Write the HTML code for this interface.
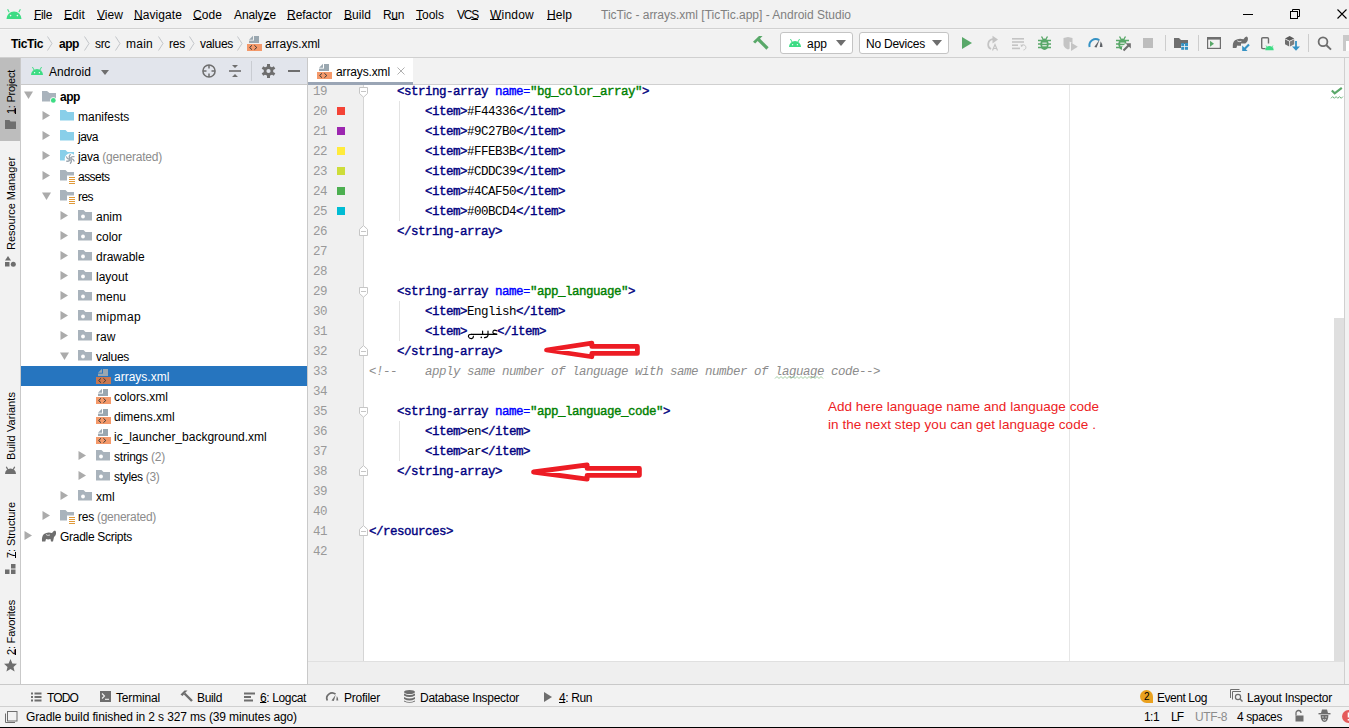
<!DOCTYPE html>
<html><head><meta charset="utf-8">
<style>
*{margin:0;padding:0;box-sizing:border-box}
html,body{width:1349px;height:728px;overflow:hidden;background:#f2f2f2;font-family:"Liberation Sans",sans-serif;font-size:12px;color:#000;position:relative}
.a{position:absolute;white-space:pre}
.ul{text-decoration:underline;text-underline-offset:0px}
svg{position:absolute;overflow:visible}
.vt{position:absolute;transform-origin:0 0;transform:rotate(-90deg);white-space:nowrap;font-size:11px;line-height:11px}
</style></head><body>
<div class="a" style="left:0px;top:0px;width:1349px;height:28px;background:#f2f2f2;"></div>
<div class="a" style="left:0px;top:28px;width:1349px;height:1px;background:#d1d1d1;"></div>
<div class="a" style="left:0px;top:29px;width:1349px;height:1px;background:#f6f6f6;"></div>
<div class="a" style="left:0px;top:57px;width:1349px;height:1px;background:#d0d0d0;"></div>
<div class="a" style="left:0px;top:58px;width:20px;height:626px;background:#f2f2f2;"></div>
<div class="a" style="left:0px;top:58px;width:20px;height:83px;background:#bdbdbd;"></div>
<div class="a" style="left:20px;top:58px;width:1px;height:626px;background:#c9c9c9;"></div>
<div class="a" style="left:21px;top:58px;width:286px;height:26px;background:#e2e5ec;"></div>
<div class="a" style="left:21px;top:84px;width:286px;height:1px;background:#c9c9c9;"></div>
<div class="a" style="left:21px;top:85px;width:286px;height:599px;background:#ffffff;"></div>
<div class="a" style="left:307px;top:58px;width:1px;height:626px;background:#c9c9c9;"></div>
<div class="a" style="left:308px;top:58px;width:1036px;height:24px;background:#f2f2f2;"></div>
<div class="a" style="left:308px;top:84px;width:1036px;height:1px;background:#d0d0d0;"></div>
<div class="a" style="left:308px;top:58px;width:105px;height:24px;background:#ffffff;"></div>
<div class="a" style="left:308px;top:82px;width:105px;height:3px;background:#9aa5b5;"></div>
<div class="a" style="left:308px;top:85px;width:1036px;height:576px;background:#ffffff;"></div>
<div class="a" style="left:308px;top:85px;width:55px;height:576px;background:#f0f0f0;"></div>
<div class="a" style="left:363px;top:85px;width:1px;height:576px;background:#d5d5d5;"></div>
<div class="a" style="left:1069px;top:85px;width:1px;height:576px;background:#e6e6e6;"></div>
<div class="a" style="left:1334px;top:318px;width:10px;height:343px;background:#dfdfdf;"></div>
<div class="a" style="left:1344px;top:58px;width:1px;height:626px;background:#d0d0d0;"></div>
<div class="a" style="left:308px;top:662px;width:1036px;height:22px;background:#efefef;"></div>
<div class="a" style="left:308px;top:661px;width:1036px;height:1px;background:#e0e0e0;"></div>
<div class="a" style="left:0px;top:684px;width:1349px;height:1px;background:#c9c9c9;"></div>
<div class="a" style="left:0px;top:706px;width:1349px;height:1px;background:#d0d0d0;"></div>
<div class="a" style="left:0px;top:727px;width:1349px;height:1px;background:#000000;"></div>
<svg style="left:6px;top:9px;" width="16" height="10" viewBox="0 0 16 10"><path d="M0.5 10 A7.5 7.5 0 0 1 15.5 10 Z" fill="#3ddc84"/><path d="M3.2 3.2 L1.6 0.3 M12.8 3.2 L14.4 0.3" stroke="#3ddc84" stroke-width="1.1"/><circle cx="4.6" cy="6.6" r="0.8" fill="#f2f2f2"/><circle cx="11.4" cy="6.6" r="0.8" fill="#f2f2f2"/></svg>
<div class="a" style="left:34px;top:9px;font-family:'Liberation Sans',sans-serif;font-size:12px;line-height:12px;color:#000;letter-spacing:-0.334px;"><span class="ul">F</span>ile</div>
<div class="a" style="left:64px;top:9px;font-family:'Liberation Sans',sans-serif;font-size:12px;line-height:12px;color:#000;letter-spacing:0.080px;"><span class="ul">E</span>dit</div>
<div class="a" style="left:97px;top:9px;font-family:'Liberation Sans',sans-serif;font-size:12px;line-height:12px;color:#000;letter-spacing:0.051px;"><span class="ul">V</span>iew</div>
<div class="a" style="left:134px;top:9px;font-family:'Liberation Sans',sans-serif;font-size:12px;line-height:12px;color:#000;letter-spacing:0.080px;"><span class="ul">N</span>avigate</div>
<div class="a" style="left:193px;top:9px;font-family:'Liberation Sans',sans-serif;font-size:12px;line-height:12px;color:#000;letter-spacing:0.078px;"><span class="ul">C</span>ode</div>
<div class="a" style="left:234px;top:9px;font-family:'Liberation Sans',sans-serif;font-size:12px;line-height:12px;color:#000;letter-spacing:-0.099px;">Analy<span class="ul">z</span>e</div>
<div class="a" style="left:287px;top:9px;font-family:'Liberation Sans',sans-serif;font-size:12px;line-height:12px;color:#000;letter-spacing:-0.044px;"><span class="ul">R</span>efactor</div>
<div class="a" style="left:344px;top:9px;font-family:'Liberation Sans',sans-serif;font-size:12px;line-height:12px;color:#000;letter-spacing:0.063px;"><span class="ul">B</span>uild</div>
<div class="a" style="left:383px;top:9px;font-family:'Liberation Sans',sans-serif;font-size:12px;line-height:12px;color:#000;letter-spacing:-0.338px;">R<span class="ul">u</span>n</div>
<div class="a" style="left:416px;top:9px;font-family:'Liberation Sans',sans-serif;font-size:12px;line-height:12px;color:#000;letter-spacing:-0.003px;"><span class="ul">T</span>ools</div>
<div class="a" style="left:457px;top:9px;font-family:'Liberation Sans',sans-serif;font-size:12px;line-height:12px;color:#000;letter-spacing:-1.225px;">VC<span class="ul">S</span></div>
<div class="a" style="left:490px;top:9px;font-family:'Liberation Sans',sans-serif;font-size:12px;line-height:12px;color:#000;letter-spacing:0.220px;"><span class="ul">W</span>indow</div>
<div class="a" style="left:547px;top:9px;font-family:'Liberation Sans',sans-serif;font-size:12px;line-height:12px;color:#000;letter-spacing:0.080px;"><span class="ul">H</span>elp</div>
<div class="a" style="left:601px;top:9px;font-family:'Liberation Sans',sans-serif;font-size:12px;line-height:12px;color:#808080;letter-spacing:-0.006px;">TicTic - arrays.xml [TicTic.app] - Android Studio</div>
<div class="a" style="left:1243px;top:14px;width:10px;height:1px;background:#000;"></div>
<svg style="left:1290px;top:9px;" width="10" height="10" viewBox="0 0 10 10"><rect x="0.5" y="2.5" width="7" height="7" fill="none" stroke="#000"/><path d="M2.5 2.5 V0.5 H9.5 V7.5 H7.5" fill="none" stroke="#000"/></svg>
<svg style="left:1337px;top:9px;" width="10" height="10" viewBox="0 0 10 10"><path d="M0.5 0.5 L9.5 9.5 M9.5 0.5 L0.5 9.5" stroke="#000" stroke-width="1.1"/></svg>
<div class="a" style="left:11px;top:38px;font-family:'Liberation Sans',sans-serif;font-size:12px;line-height:12px;color:#000;letter-spacing:-0.374px;font-weight:bold;">TicTic</div>
<svg style="left:47px;top:36px;" width="6" height="15" viewBox="0 0 6 15"><path d="M0.5 0.5 L5 7.5 L0.5 14.5" fill="none" stroke="#c3c6ca" stroke-width="1"/></svg>
<div class="a" style="left:59px;top:38px;font-family:'Liberation Sans',sans-serif;font-size:12px;line-height:12px;color:#000;letter-spacing:-0.445px;font-weight:bold;">app</div>
<svg style="left:84px;top:36px;" width="6" height="15" viewBox="0 0 6 15"><path d="M0.5 0.5 L5 7.5 L0.5 14.5" fill="none" stroke="#c3c6ca" stroke-width="1"/></svg>
<div class="a" style="left:95px;top:38px;font-family:'Liberation Sans',sans-serif;font-size:12px;line-height:12px;color:#000;letter-spacing:-0.332px;">src</div>
<svg style="left:115px;top:36px;" width="6" height="15" viewBox="0 0 6 15"><path d="M0.5 0.5 L5 7.5 L0.5 14.5" fill="none" stroke="#c3c6ca" stroke-width="1"/></svg>
<div class="a" style="left:126px;top:38px;font-family:'Liberation Sans',sans-serif;font-size:12px;line-height:12px;color:#000;letter-spacing:0.247px;">main</div>
<svg style="left:158px;top:36px;" width="6" height="15" viewBox="0 0 6 15"><path d="M0.5 0.5 L5 7.5 L0.5 14.5" fill="none" stroke="#c3c6ca" stroke-width="1"/></svg>
<div class="a" style="left:169px;top:38px;font-family:'Liberation Sans',sans-serif;font-size:12px;line-height:12px;color:#000;letter-spacing:-0.224px;">res</div>
<svg style="left:189px;top:36px;" width="6" height="15" viewBox="0 0 6 15"><path d="M0.5 0.5 L5 7.5 L0.5 14.5" fill="none" stroke="#c3c6ca" stroke-width="1"/></svg>
<div class="a" style="left:200px;top:38px;font-family:'Liberation Sans',sans-serif;font-size:12px;line-height:12px;color:#000;letter-spacing:-0.281px;">values</div>
<svg style="left:237px;top:36px;" width="6" height="15" viewBox="0 0 6 15"><path d="M0.5 0.5 L5 7.5 L0.5 14.5" fill="none" stroke="#c3c6ca" stroke-width="1"/></svg>
<svg style="left:247px;top:36px;" width="15" height="15" viewBox="0 0 15 15"><rect x="7" y="0" width="5" height="7" fill="#9aa7b0"/><rect x="2" y="4.6" width="10" height="2.4" fill="#9aa7b0"/><path d="M2 3.8 H6 V-0.2 Z" fill="#9aa7b0"/><rect x="0" y="8" width="15" height="7" fill="#f4996a"/><path d="M5 9.3 L2.6 11.5 L5 13.7 M7.4 9.3 L9.8 11.5 L7.4 13.7" fill="none" stroke="#3a3a3a" stroke-width="1"/></svg>
<div class="a" style="left:265px;top:38px;font-family:'Liberation Sans',sans-serif;font-size:12px;line-height:12px;color:#000;letter-spacing:-0.034px;">arrays.xml</div>
<svg style="left:752px;top:35px;" width="17" height="16" viewBox="0 0 17 16"><path d="M1 6.8 L7 1 L10.5 1 L8.2 3.4 L3.2 8.5 Z" fill="#59a869"/><path d="M6.5 4.5 L15.5 13.5" stroke="#59a869" stroke-width="3.2"/></svg>
<div class="a" style="left:780px;top:32px;width:73px;height:22px;border:1px solid #c4c4c4;border-radius:3px;background:#fff"></div>
<svg style="left:789px;top:39px;" width="12" height="7.92" viewBox="0 0 12 7.92"><path d="M0 7.92 A6.00 6.00 0 0 1 12 7.92 Z" fill="#3ddc84" transform="translate(0,0.00)"/><path d="M3.24 3.33 L1.44 0 M8.76 3.33 L10.56 0" stroke="#3ddc84" stroke-width="0.96"/><circle cx="3.60" cy="5.70" r="0.66" fill="#ffffff"/><circle cx="8.40" cy="5.70" r="0.66" fill="#ffffff"/></svg>
<div class="a" style="left:807px;top:38px;font-family:'Liberation Sans',sans-serif;font-size:12px;line-height:12px;color:#000;letter-spacing:-0.007px;">app</div>
<svg style="left:836px;top:40px;" width="10" height="6" viewBox="0 0 10 6"><path d="M0 0 H10 L5 6 Z" fill="#6e6e6e"/></svg>
<div class="a" style="left:859px;top:32px;width:90px;height:22px;border:1px solid #c4c4c4;border-radius:3px;background:#fff"></div>
<div class="a" style="left:866px;top:38px;font-family:'Liberation Sans',sans-serif;font-size:12px;line-height:12px;color:#000;letter-spacing:-0.235px;">No Devices</div>
<svg style="left:932px;top:40px;" width="10" height="6" viewBox="0 0 10 6"><path d="M0 0 H10 L5 6 Z" fill="#6e6e6e"/></svg>
<svg style="left:962px;top:37px;" width="10" height="12" viewBox="0 0 10 12"><path d="M0 0 L10 6 L0 12 Z" fill="#59a869"/></svg>
<svg style="left:984px;top:35px;" width="16" height="16" viewBox="0 0 16 16"><path d="M7 14 A5.2 5.2 0 0 1 9 4.2" fill="none" stroke="#c4c4c4" stroke-width="1.8"/><path d="M8.5 0.8 L14 4.5 L8.5 8.5 Z" fill="#c4c4c4"/><path d="M8.5 15.5 L11 9.5 L13.5 15.5 M9.5 13.5 H12.5" fill="none" stroke="#c4c4c4" stroke-width="1.2"/></svg>
<svg style="left:1012px;top:37px;" width="16" height="14" viewBox="0 0 16 14"><rect x="0" y="1" width="12" height="1.6" fill="#c4c4c4"/><rect x="0" y="4.2" width="12" height="1.6" fill="#c4c4c4"/><rect x="0" y="7.4" width="6" height="1.6" fill="#c4c4c4"/><rect x="0" y="10.6" width="8" height="1.6" fill="#c4c4c4"/><path d="M9.5 8.5 A2.6 2.6 0 1 1 11.5 13" fill="none" stroke="#c4c4c4" stroke-width="1"/><path d="M8.6 7.2 L9 10 L11.5 8.8 Z" fill="#c4c4c4"/></svg>
<svg style="left:1037.5px;top:36px;" width="13" height="14" viewBox="0 0 13 14"><path d="M3.5 0.5 L5 3 M9.5 0.5 L8 3" stroke="#59a869" stroke-width="1.4"/><ellipse cx="6.5" cy="8.3" rx="4.2" ry="5.7" fill="#59a869"/><path d="M0 4.5 H13 M0 8 H13 M0 11.5 H13" stroke="#59a869" stroke-width="1.4"/><rect x="4.3" y="6.6" width="4.4" height="1.1" fill="#f2f2f2"/><rect x="4.3" y="9.2" width="4.4" height="1.1" fill="#f2f2f2"/></svg>
<svg style="left:1063px;top:37px;" width="15" height="14" viewBox="0 0 15 14"><path d="M0.5 1 L5 0 L9.5 1 V7.5 Q9.5 10.5 5 12.5 Q0.5 10.5 0.5 7.5 Z" fill="#c4c4c4"/><path d="M6.6 4.6 L15.6 9.8 L6.6 15 Z" fill="#f2f2f2"/><path d="M8 5.6 L14.8 9.8 L8 14 Z" fill="#c4c4c4"/></svg>
<svg style="left:1088px;top:37px;" width="16" height="11" viewBox="0 0 16 11"><path d="M1.6 10 A6.3 6.3 0 0 1 11.2 3.2" fill="none" stroke="#3592c4" stroke-width="2"/><path d="M6.3 10 L11.8 2.2 L8.6 10.4 Z" fill="#5f6368"/><path d="M12.6 4.2 Q14.5 6.5 14.5 10 H11.8 Z" fill="#5f6368"/></svg>
<svg style="left:1115.5px;top:36px;" width="13" height="14" viewBox="0 0 13 14"><path d="M3.5 0.5 L5 3 M9.5 0.5 L8 3" stroke="#59a869" stroke-width="1.4"/><ellipse cx="6.5" cy="8.3" rx="4.2" ry="5.7" fill="#59a869"/><path d="M0 4.5 H13 M0 8 H13 M0 11.5 H13" stroke="#59a869" stroke-width="1.4"/><rect x="4.3" y="6.6" width="4.4" height="1.1" fill="#f2f2f2"/><rect x="4.3" y="9.2" width="4.4" height="1.1" fill="#f2f2f2"/></svg>
<svg style="left:1121px;top:41px;" width="11" height="11" viewBox="0 0 11 11"><path d="M1 10 L1 6 L5.5 1.5 H11 V11 Z" fill="#f2f2f2"/><path d="M2.5 9.5 L8 4" stroke="#6e6e6e" stroke-width="2.2"/><path d="M4.5 2.2 H9.8 V7.5 Z" fill="#6e6e6e"/></svg>
<div class="a" style="left:1143px;top:38px;width:10px;height:10px;background:#bdbdbd;"></div>
<div class="a" style="left:1165px;top:35px;width:1px;height:16px;background:#cdcdcd;"></div>
<svg style="left:1174px;top:38px;" width="15" height="12" viewBox="0 0 15 12"><path d="M0 0 H5 L7 2 H14 V6 H7 V10 H0 Z" fill="#6e6e6e"/><rect x="7.2" y="5" width="3" height="3" fill="#3592c4"/><rect x="11" y="5" width="3" height="3" fill="#3592c4"/><rect x="7.2" y="8.8" width="3" height="3" fill="#3592c4"/><rect x="11" y="8.8" width="3" height="3" fill="#3592c4"/></svg>
<div class="a" style="left:1198px;top:35px;width:1px;height:16px;background:#cdcdcd;"></div>
<svg style="left:1207px;top:37px;" width="14" height="12" viewBox="0 0 14 12"><rect x="0.6" y="0.6" width="12.8" height="10.8" fill="none" stroke="#6e6e6e" stroke-width="1.2"/><rect x="0" y="0" width="14" height="2.6" fill="#6e6e6e"/><path d="M3 3.8 L7 6.8 L3 9.8 Z" fill="#59a869"/></svg>
<svg style="left:1232px;top:36px;" width="18" height="15" viewBox="0 0 18 15"><path d="M0.8 12 Q0.3 6.5 3 4.3 Q6.8 1.8 11.5 3.3 Q13 0.6 14.6 0.6 Q16.4 1.1 15.8 4.3 Q15.2 6.3 13.6 7.3 L12.6 12 H10.4 L9.9 9.4 Q7.3 10.2 5.2 9.4 L4.4 12 Z" fill="#6e6e6e"/><path d="M5.2 4.8 Q6.8 6.3 9.4 5.3" fill="none" stroke="#f2f2f2" stroke-width="0.8"/><rect x="9" y="7.5" width="9" height="8" fill="#f2f2f2"/><path d="M17 8.5 L12 13.5" stroke="#3592c4" stroke-width="2.2"/><path d="M10.2 9.6 V15 H15.6 Z" fill="#3592c4"/></svg>
<svg style="left:1261px;top:37px;" width="13" height="14" viewBox="0 0 13 14"><path d="M4.5 11.6 H1.8 Q0.7 11.6 0.7 10.5 V1.8 Q0.7 0.7 1.8 0.7 H6.4 Q7.5 0.7 7.5 1.8 V6.5" fill="none" stroke="#6e6e6e" stroke-width="1.4"/><path d="M4.3 13.2 A4.2 4.2 0 0 1 12.7 13.2 Z" fill="#3ddc84"/><path d="M5.9 9.9 L5.1 8.6 M11.1 9.9 L11.9 8.6" stroke="#3ddc84" stroke-width="0.9"/></svg>
<svg style="left:1285px;top:36px;" width="16" height="15" viewBox="0 0 16 15"><path d="M4.6 0 L9.2 2.4 L4.6 4.8 L0 2.4 Z" fill="#5a5a5a"/><path d="M0 3.2 L4.2 5.4 V10.5 L0 8.3 Z" fill="#6e6e6e"/><path d="M9.2 3.2 L5 5.4 V10.5 L9.2 8.3 Z" fill="#7f7f7f"/><path d="M11 5 V12" stroke="#3592c4" stroke-width="1.8"/><path d="M7 10.5 H15 L11 14.8 Z" fill="#3592c4"/></svg>
<div class="a" style="left:1308px;top:34px;width:1px;height:18px;background:#cdcdcd;"></div>
<svg style="left:1317px;top:36px;" width="16" height="16" viewBox="0 0 16 16"><circle cx="6" cy="5.8" r="4.4" fill="none" stroke="#6e6e6e" stroke-width="1.8"/><path d="M9.2 9 L14 13.6" stroke="#6e6e6e" stroke-width="2"/></svg>
<div class="a" style="left:1343px;top:35px;width:6px;height:16px;background:#c9c9c9;"></div>
<div class="a" style="left:1346px;top:41px;width:3px;height:10px;background:#ffffff;"></div>
<div class="vt" style="left:6px;top:114px;color:#000;letter-spacing:-0.247px;"><span class="ul">1</span>: Project</div>
<svg style="left:5px;top:120px;" width="11" height="9" viewBox="0 0 11 9"><path d="M0 0 H4.5 L5.5 1.5 H11 V9 H0 Z" fill="#6e6e6e"/></svg>
<div class="vt" style="left:6px;top:250px;color:#000;letter-spacing:-0.034px;">Resource Manager</div>
<svg style="left:5px;top:256px;" width="11" height="11" viewBox="0 0 11 11"><path d="M3 0 L6 4.5 H0 Z" fill="#6e6e6e"/><rect x="0" y="6" width="4.5" height="4.5" fill="#6e6e6e"/><circle cx="8.3" cy="8.2" r="2.5" fill="#6e6e6e"/></svg>
<div class="vt" style="left:6px;top:460px;color:#000;letter-spacing:0.067px;">Build Variants</div>
<svg style="left:5px;top:466px;" width="11" height="8" viewBox="0 0 11 8"><path d="M0 8 A5.5 5.5 0 0 1 11 8 Z" fill="#6e6e6e"/><path d="M2.8 3.6 L1.3 0.8 M8.2 3.6 L9.7 0.8" stroke="#6e6e6e" stroke-width="1.2"/></svg>
<div class="vt" style="left:6px;top:558px;color:#000;letter-spacing:-0.072px;"><span class="ul">7</span>: Structure</div>
<svg style="left:5px;top:564px;" width="11" height="10" viewBox="0 0 11 10"><rect x="6" y="0" width="4.5" height="4.5" fill="#6e6e6e"/><rect x="0" y="5.5" width="4.5" height="4.5" fill="#6e6e6e"/><rect x="6" y="5.5" width="4.5" height="4.5" fill="#6e6e6e"/></svg>
<div class="vt" style="left:6px;top:655px;color:#000;letter-spacing:-0.206px;"><span class="ul">2</span>: Favorites</div>
<svg style="left:4px;top:659px;" width="13" height="13" viewBox="0 0 13 13"><path d="M6.5 0 L8.4 4.4 L13 4.8 L9.5 7.9 L10.6 12.5 L6.5 10 L2.4 12.5 L3.5 7.9 L0 4.8 L4.6 4.4 Z" fill="#6e6e6e"/></svg>
<svg style="left:31px;top:67px;" width="12" height="7.92" viewBox="0 0 12 7.92"><path d="M0 7.92 A6.00 6.00 0 0 1 12 7.92 Z" fill="#3ddc84" transform="translate(0,0.00)"/><path d="M3.24 3.33 L1.44 0 M8.76 3.33 L10.56 0" stroke="#3ddc84" stroke-width="0.96"/><circle cx="3.60" cy="5.70" r="0.66" fill="#ffffff"/><circle cx="8.40" cy="5.70" r="0.66" fill="#ffffff"/></svg>
<div class="a" style="left:49px;top:66px;font-family:'Liberation Sans',sans-serif;font-size:12px;line-height:12px;color:#000;letter-spacing:0.091px;">Android</div>
<svg style="left:101px;top:70px;" width="8" height="5" viewBox="0 0 8 5"><path d="M0 0 H8 L4 5 Z" fill="#6e6e6e"/></svg>
<svg style="left:202px;top:64px;" width="14" height="14" viewBox="0 0 14 14"><circle cx="7" cy="7" r="6.1" fill="none" stroke="#6e6e6e" stroke-width="1.5"/><path d="M7 1 V4.5 M7 9.5 V13 M1 7 H4.5 M9.5 7 H13" stroke="#6e6e6e" stroke-width="1.5"/></svg>
<svg style="left:229px;top:65px;" width="12" height="13" viewBox="0 0 12 13"><rect x="0" y="5.2" width="12" height="1.6" fill="#6e6e6e"/><path d="M3 0 H9 L6 3 Z M3 12 H9 L6 9 Z" fill="#6e6e6e"/></svg>
<div class="a" style="left:251px;top:61px;width:1px;height:20px;background:#c9ccd2;"></div>
<svg style="left:262px;top:64px;" width="13" height="14" viewBox="0 0 13 14"><g fill="#6e6e6e"><circle cx="6.5" cy="7" r="4.8"/><rect x="5" y="0" width="3" height="14"/><rect x="5" y="0" width="3" height="14" transform="rotate(60 6.5 7)"/><rect x="5" y="0" width="3" height="14" transform="rotate(-60 6.5 7)"/></g><circle cx="6.5" cy="7" r="2.1" fill="#e2e5ec"/></svg>
<div class="a" style="left:288px;top:70px;width:12px;height:2px;background:#6e6e6e;"></div>
<svg style="left:24px;top:91px;" width="9" height="8" viewBox="0 0 9 8"><path d="M0 0.5 H9 L4.5 8 Z" fill="#ababab"/></svg>
<svg style="left:42px;top:91px;" width="14" height="12" viewBox="0 0 14 12"><path d="M0 0 H5 L7.5 2 H14 V10.5 H0 Z" fill="#a9b3bc"/><circle cx="11.3" cy="9.4" r="3.2" fill="#fff"/><circle cx="11.3" cy="9.4" r="2.4" fill="#3ddc84"/></svg>
<div class="a" style="left:60px;top:91px;font-family:'Liberation Sans',sans-serif;font-size:12px;line-height:12px;color:#000;letter-spacing:-0.445px;font-weight:bold;">app</div>
<div class="a" style="left:21px;top:366px;width:286px;height:20px;background:#2675bf;"></div>
<svg style="left:42px;top:111px;" width="8" height="9" viewBox="0 0 8 9"><path d="M0.5 0 L8 4.5 L0.5 9 Z" fill="#ababab"/></svg>
<svg style="left:60px;top:110px;" width="14" height="11" viewBox="0 0 14 11"><path d="M0 0 H5.5 L7.5 2 H14 V10.5 H0 Z" fill="#89cfe9"/></svg>
<div class="a" style="left:78px;top:111px;font-family:'Liberation Sans',sans-serif;font-size:12px;line-height:12px;color:#000;">manifests</div>
<svg style="left:42px;top:131px;" width="8" height="9" viewBox="0 0 8 9"><path d="M0.5 0 L8 4.5 L0.5 9 Z" fill="#ababab"/></svg>
<svg style="left:60px;top:130px;" width="14" height="11" viewBox="0 0 14 11"><path d="M0 0 H5.5 L7.5 2 H14 V10.5 H0 Z" fill="#89cfe9"/></svg>
<div class="a" style="left:78px;top:131px;font-family:'Liberation Sans',sans-serif;font-size:12px;line-height:12px;color:#000;letter-spacing:-0.504px;">java</div>
<svg style="left:42px;top:151px;" width="8" height="9" viewBox="0 0 8 9"><path d="M0.5 0 L8 4.5 L0.5 9 Z" fill="#ababab"/></svg>
<svg style="left:60px;top:150px;" width="15" height="14" viewBox="0 0 15 14"><path d="M0 0 H5.5 L7.5 2 H14 V10.5 H0 Z" fill="#89cfe9"/><circle cx="10.3" cy="8.9" r="5.6" fill="#fff"/><path d="M11.30 8.90 Q13.27 8.45 14.07 10.96 M10.80 9.77 Q12.17 11.24 10.40 13.20 M9.80 9.77 Q9.21 11.69 6.63 11.14 M9.30 8.90 Q7.33 9.35 6.53 6.84 M9.80 8.03 Q8.43 6.56 10.20 4.60 M10.80 8.03 Q11.39 6.11 13.97 6.66 " fill="none" stroke="#9aa4ad" stroke-width="1.3" stroke-linecap="round"/></svg>
<div class="a" style="left:78px;top:151px;font-family:'Liberation Sans',sans-serif;font-size:12px;line-height:12px;color:#000;letter-spacing:-0.212px;">java<span style="color:#8c8c8c"> (generated)</span></div>
<svg style="left:42px;top:171px;" width="8" height="9" viewBox="0 0 8 9"><path d="M0.5 0 L8 4.5 L0.5 9 Z" fill="#ababab"/></svg>
<svg style="left:60px;top:170px;" width="14" height="13" viewBox="0 0 14 13"><path d="M0 0 H5.5 L7.5 2 H14 V10.5 H0 Z" fill="#a9b3bc"/><rect x="7" y="5.5" width="8" height="8.5" fill="#fff"/><path d="M9 7.5 H15 M9 9.5 H15 M9 11.5 H15 M9 13.5 H15" stroke="#e09a3a" stroke-width="1"/></svg>
<div class="a" style="left:78px;top:171px;font-family:'Liberation Sans',sans-serif;font-size:12px;line-height:12px;color:#000;letter-spacing:-0.530px;">assets</div>
<svg style="left:42px;top:192px;" width="9" height="8" viewBox="0 0 9 8"><path d="M0 0.5 H9 L4.5 8 Z" fill="#ababab"/></svg>
<svg style="left:60px;top:190px;" width="14" height="13" viewBox="0 0 14 13"><path d="M0 0 H5.5 L7.5 2 H14 V10.5 H0 Z" fill="#a9b3bc"/><rect x="7" y="5.5" width="8" height="8.5" fill="#fff"/><path d="M9 7.5 H15 M9 9.5 H15 M9 11.5 H15 M9 13.5 H15" stroke="#e09a3a" stroke-width="1"/></svg>
<div class="a" style="left:78px;top:191px;font-family:'Liberation Sans',sans-serif;font-size:12px;line-height:12px;color:#000;letter-spacing:-0.557px;">res</div>
<svg style="left:60px;top:211px;" width="8" height="9" viewBox="0 0 8 9"><path d="M0.5 0 L8 4.5 L0.5 9 Z" fill="#ababab"/></svg>
<svg style="left:78px;top:210px;" width="14" height="11" viewBox="0 0 14 11"><path d="M0 0 H5.5 L7.5 2 H14 V10.5 H0 Z" fill="#a9b3bc"/><circle cx="5" cy="6.5" r="1.9" fill="#fff"/></svg>
<div class="a" style="left:96px;top:211px;font-family:'Liberation Sans',sans-serif;font-size:12px;line-height:12px;color:#000;">anim</div>
<svg style="left:60px;top:231px;" width="8" height="9" viewBox="0 0 8 9"><path d="M0.5 0 L8 4.5 L0.5 9 Z" fill="#ababab"/></svg>
<svg style="left:78px;top:230px;" width="14" height="11" viewBox="0 0 14 11"><path d="M0 0 H5.5 L7.5 2 H14 V10.5 H0 Z" fill="#a9b3bc"/><circle cx="5" cy="6.5" r="1.9" fill="#fff"/></svg>
<div class="a" style="left:96px;top:231px;font-family:'Liberation Sans',sans-serif;font-size:12px;line-height:12px;color:#000;">color</div>
<svg style="left:60px;top:251px;" width="8" height="9" viewBox="0 0 8 9"><path d="M0.5 0 L8 4.5 L0.5 9 Z" fill="#ababab"/></svg>
<svg style="left:78px;top:250px;" width="14" height="11" viewBox="0 0 14 11"><path d="M0 0 H5.5 L7.5 2 H14 V10.5 H0 Z" fill="#a9b3bc"/><circle cx="5" cy="6.5" r="1.9" fill="#fff"/></svg>
<div class="a" style="left:96px;top:251px;font-family:'Liberation Sans',sans-serif;font-size:12px;line-height:12px;color:#000;">drawable</div>
<svg style="left:60px;top:271px;" width="8" height="9" viewBox="0 0 8 9"><path d="M0.5 0 L8 4.5 L0.5 9 Z" fill="#ababab"/></svg>
<svg style="left:78px;top:270px;" width="14" height="11" viewBox="0 0 14 11"><path d="M0 0 H5.5 L7.5 2 H14 V10.5 H0 Z" fill="#a9b3bc"/><circle cx="5" cy="6.5" r="1.9" fill="#fff"/></svg>
<div class="a" style="left:96px;top:271px;font-family:'Liberation Sans',sans-serif;font-size:12px;line-height:12px;color:#000;">layout</div>
<svg style="left:60px;top:291px;" width="8" height="9" viewBox="0 0 8 9"><path d="M0.5 0 L8 4.5 L0.5 9 Z" fill="#ababab"/></svg>
<svg style="left:78px;top:290px;" width="14" height="11" viewBox="0 0 14 11"><path d="M0 0 H5.5 L7.5 2 H14 V10.5 H0 Z" fill="#a9b3bc"/><circle cx="5" cy="6.5" r="1.9" fill="#fff"/></svg>
<div class="a" style="left:96px;top:291px;font-family:'Liberation Sans',sans-serif;font-size:12px;line-height:12px;color:#000;">menu</div>
<svg style="left:60px;top:311px;" width="8" height="9" viewBox="0 0 8 9"><path d="M0.5 0 L8 4.5 L0.5 9 Z" fill="#ababab"/></svg>
<svg style="left:78px;top:310px;" width="14" height="11" viewBox="0 0 14 11"><path d="M0 0 H5.5 L7.5 2 H14 V10.5 H0 Z" fill="#a9b3bc"/><circle cx="5" cy="6.5" r="1.9" fill="#fff"/></svg>
<div class="a" style="left:96px;top:311px;font-family:'Liberation Sans',sans-serif;font-size:12px;line-height:12px;color:#000;letter-spacing:0.386px;">mipmap</div>
<svg style="left:60px;top:331px;" width="8" height="9" viewBox="0 0 8 9"><path d="M0.5 0 L8 4.5 L0.5 9 Z" fill="#ababab"/></svg>
<svg style="left:78px;top:330px;" width="14" height="11" viewBox="0 0 14 11"><path d="M0 0 H5.5 L7.5 2 H14 V10.5 H0 Z" fill="#a9b3bc"/><circle cx="5" cy="6.5" r="1.9" fill="#fff"/></svg>
<div class="a" style="left:96px;top:331px;font-family:'Liberation Sans',sans-serif;font-size:12px;line-height:12px;color:#000;">raw</div>
<svg style="left:60px;top:352px;" width="9" height="8" viewBox="0 0 9 8"><path d="M0 0.5 H9 L4.5 8 Z" fill="#ababab"/></svg>
<svg style="left:78px;top:350px;" width="14" height="11" viewBox="0 0 14 11"><path d="M0 0 H5.5 L7.5 2 H14 V10.5 H0 Z" fill="#a9b3bc"/><circle cx="5" cy="6.5" r="1.9" fill="#fff"/></svg>
<div class="a" style="left:96px;top:351px;font-family:'Liberation Sans',sans-serif;font-size:12px;line-height:12px;color:#000;letter-spacing:-0.281px;">values</div>
<svg style="left:96px;top:369px;" width="15" height="15" viewBox="0 0 15 15"><rect x="7" y="0" width="5" height="7" fill="#9aa7b0"/><rect x="2" y="4.6" width="10" height="2.4" fill="#9aa7b0"/><path d="M2 3.8 H6 V-0.2 Z" fill="#9aa7b0"/><rect x="0" y="8" width="15" height="7" fill="#c87750"/><path d="M5 9.3 L2.6 11.5 L5 13.7 M7.4 9.3 L9.8 11.5 L7.4 13.7" fill="none" stroke="#3a3a3a" stroke-width="1"/></svg>
<div class="a" style="left:114px;top:371px;font-family:'Liberation Sans',sans-serif;font-size:12px;line-height:12px;color:#fff;">arrays.xml</div>
<svg style="left:96px;top:389px;" width="15" height="15" viewBox="0 0 15 15"><rect x="7" y="0" width="5" height="7" fill="#9aa7b0"/><rect x="2" y="4.6" width="10" height="2.4" fill="#9aa7b0"/><path d="M2 3.8 H6 V-0.2 Z" fill="#9aa7b0"/><rect x="0" y="8" width="15" height="7" fill="#f4996a"/><path d="M5 9.3 L2.6 11.5 L5 13.7 M7.4 9.3 L9.8 11.5 L7.4 13.7" fill="none" stroke="#3a3a3a" stroke-width="1"/></svg>
<div class="a" style="left:114px;top:391px;font-family:'Liberation Sans',sans-serif;font-size:12px;line-height:12px;color:#000;">colors.xml</div>
<svg style="left:96px;top:409px;" width="15" height="15" viewBox="0 0 15 15"><rect x="7" y="0" width="5" height="7" fill="#9aa7b0"/><rect x="2" y="4.6" width="10" height="2.4" fill="#9aa7b0"/><path d="M2 3.8 H6 V-0.2 Z" fill="#9aa7b0"/><rect x="0" y="8" width="15" height="7" fill="#f4996a"/><path d="M5 9.3 L2.6 11.5 L5 13.7 M7.4 9.3 L9.8 11.5 L7.4 13.7" fill="none" stroke="#3a3a3a" stroke-width="1"/></svg>
<div class="a" style="left:114px;top:411px;font-family:'Liberation Sans',sans-serif;font-size:12px;line-height:12px;color:#000;">dimens.xml</div>
<svg style="left:96px;top:429px;" width="15" height="15" viewBox="0 0 15 15"><rect x="7" y="0" width="5" height="7" fill="#9aa7b0"/><rect x="2" y="4.6" width="10" height="2.4" fill="#9aa7b0"/><path d="M2 3.8 H6 V-0.2 Z" fill="#9aa7b0"/><rect x="0" y="8" width="15" height="7" fill="#f4996a"/><path d="M5 9.3 L2.6 11.5 L5 13.7 M7.4 9.3 L9.8 11.5 L7.4 13.7" fill="none" stroke="#3a3a3a" stroke-width="1"/></svg>
<div class="a" style="left:114px;top:431px;font-family:'Liberation Sans',sans-serif;font-size:12px;line-height:12px;color:#000;">ic_launcher_background.xml</div>
<svg style="left:78px;top:451px;" width="8" height="9" viewBox="0 0 8 9"><path d="M0.5 0 L8 4.5 L0.5 9 Z" fill="#ababab"/></svg>
<svg style="left:96px;top:450px;" width="14" height="11" viewBox="0 0 14 11"><path d="M0 0 H5.5 L7.5 2 H14 V10.5 H0 Z" fill="#a9b3bc"/><circle cx="5" cy="6.5" r="1.9" fill="#fff"/></svg>
<div class="a" style="left:114px;top:451px;font-family:'Liberation Sans',sans-serif;font-size:12px;line-height:12px;color:#000;letter-spacing:-0.213px;">strings<span style="color:#8c8c8c"> (2)</span></div>
<svg style="left:78px;top:471px;" width="8" height="9" viewBox="0 0 8 9"><path d="M0.5 0 L8 4.5 L0.5 9 Z" fill="#ababab"/></svg>
<svg style="left:96px;top:470px;" width="14" height="11" viewBox="0 0 14 11"><path d="M0 0 H5.5 L7.5 2 H14 V10.5 H0 Z" fill="#a9b3bc"/><circle cx="5" cy="6.5" r="1.9" fill="#fff"/></svg>
<div class="a" style="left:114px;top:471px;font-family:'Liberation Sans',sans-serif;font-size:12px;line-height:12px;color:#000;letter-spacing:-0.317px;">styles<span style="color:#8c8c8c"> (3)</span></div>
<svg style="left:60px;top:491px;" width="8" height="9" viewBox="0 0 8 9"><path d="M0.5 0 L8 4.5 L0.5 9 Z" fill="#ababab"/></svg>
<svg style="left:78px;top:490px;" width="14" height="11" viewBox="0 0 14 11"><path d="M0 0 H5.5 L7.5 2 H14 V10.5 H0 Z" fill="#a9b3bc"/><circle cx="5" cy="6.5" r="1.9" fill="#fff"/></svg>
<div class="a" style="left:96px;top:491px;font-family:'Liberation Sans',sans-serif;font-size:12px;line-height:12px;color:#000;">xml</div>
<svg style="left:42px;top:511px;" width="8" height="9" viewBox="0 0 8 9"><path d="M0.5 0 L8 4.5 L0.5 9 Z" fill="#ababab"/></svg>
<svg style="left:60px;top:510px;" width="14" height="13" viewBox="0 0 14 13"><path d="M0 0 H5.5 L7.5 2 H14 V10.5 H0 Z" fill="#a9b3bc"/><rect x="7" y="5.5" width="8" height="8.5" fill="#fff"/><path d="M9 7.5 H15 M9 9.5 H15 M9 11.5 H15 M9 13.5 H15" stroke="#e09a3a" stroke-width="1"/></svg>
<div class="a" style="left:78px;top:511px;font-family:'Liberation Sans',sans-serif;font-size:12px;line-height:12px;color:#000;letter-spacing:-0.270px;">res<span style="color:#8c8c8c"> (generated)</span></div>
<svg style="left:24px;top:531px;" width="8" height="9" viewBox="0 0 8 9"><path d="M0.5 0 L8 4.5 L0.5 9 Z" fill="#ababab"/></svg>
<svg style="left:41px;top:530px;" width="16" height="12" viewBox="0 0 16 12"><path d="M1 11.5 Q0.5 6 3 4 Q6.5 1.5 11 3 Q12.5 0.5 14 0.5 Q15.5 1 15 4 Q14.5 6 13 7 L12 11.5 H10 L9.5 9 Q7 9.8 5 9 L4.3 11.5 Z" fill="#6e6e6e"/><path d="M5 4.5 Q6.5 6 9 5" fill="none" stroke="#fff" stroke-width="0.7"/></svg>
<div class="a" style="left:60px;top:531px;font-family:'Liberation Sans',sans-serif;font-size:12px;line-height:12px;color:#000;letter-spacing:-0.288px;">Gradle Scripts</div>
<svg style="left:317px;top:64px;" width="15" height="15" viewBox="0 0 15 15"><rect x="7" y="0" width="5" height="7" fill="#9aa7b0"/><rect x="2" y="4.6" width="10" height="2.4" fill="#9aa7b0"/><path d="M2 3.8 H6 V-0.2 Z" fill="#9aa7b0"/><rect x="0" y="8" width="15" height="7" fill="#f4996a"/><path d="M5 9.3 L2.6 11.5 L5 13.7 M7.4 9.3 L9.8 11.5 L7.4 13.7" fill="none" stroke="#3a3a3a" stroke-width="1"/></svg>
<div class="a" style="left:336px;top:66px;font-family:'Liberation Sans',sans-serif;font-size:12px;line-height:12px;color:#000;letter-spacing:-0.134px;">arrays.xml</div>
<svg style="left:397px;top:67px;" width="8" height="8" viewBox="0 0 8 8"><path d="M0.5 0.5 L7.5 7.5 M7.5 0.5 L0.5 7.5" stroke="#b0b0b0" stroke-width="1"/></svg>
<svg style="left:1331px;top:87px;" width="12" height="12" viewBox="0 0 12 12"><path d="M0.8 3.5 L3.7 6.3 L10.8 0.8" fill="none" stroke="#59a869" stroke-width="2.2"/><path d="M0 11.3 L1.7 9.6 L3.4 11.3 L5.1 9.6 L6.8 11.3 L8.5 9.6 L10.2 11.3 L11.9 9.6" fill="none" stroke="#59a869" stroke-width="0.9"/></svg>
<div class="a" style="left:313px;top:86px;font-family:'Liberation Mono',monospace;font-size:12.5px;line-height:12.5px;letter-spacing:-0.5px;color:#999999">19</div>
<div class="a" style="left:313px;top:106px;font-family:'Liberation Mono',monospace;font-size:12.5px;line-height:12.5px;letter-spacing:-0.5px;color:#999999">20</div>
<div class="a" style="left:313px;top:126px;font-family:'Liberation Mono',monospace;font-size:12.5px;line-height:12.5px;letter-spacing:-0.5px;color:#999999">21</div>
<div class="a" style="left:313px;top:146px;font-family:'Liberation Mono',monospace;font-size:12.5px;line-height:12.5px;letter-spacing:-0.5px;color:#999999">22</div>
<div class="a" style="left:313px;top:166px;font-family:'Liberation Mono',monospace;font-size:12.5px;line-height:12.5px;letter-spacing:-0.5px;color:#999999">23</div>
<div class="a" style="left:313px;top:186px;font-family:'Liberation Mono',monospace;font-size:12.5px;line-height:12.5px;letter-spacing:-0.5px;color:#999999">24</div>
<div class="a" style="left:313px;top:206px;font-family:'Liberation Mono',monospace;font-size:12.5px;line-height:12.5px;letter-spacing:-0.5px;color:#999999">25</div>
<div class="a" style="left:313px;top:226px;font-family:'Liberation Mono',monospace;font-size:12.5px;line-height:12.5px;letter-spacing:-0.5px;color:#999999">26</div>
<div class="a" style="left:313px;top:246px;font-family:'Liberation Mono',monospace;font-size:12.5px;line-height:12.5px;letter-spacing:-0.5px;color:#999999">27</div>
<div class="a" style="left:313px;top:266px;font-family:'Liberation Mono',monospace;font-size:12.5px;line-height:12.5px;letter-spacing:-0.5px;color:#999999">28</div>
<div class="a" style="left:313px;top:286px;font-family:'Liberation Mono',monospace;font-size:12.5px;line-height:12.5px;letter-spacing:-0.5px;color:#999999">29</div>
<div class="a" style="left:313px;top:306px;font-family:'Liberation Mono',monospace;font-size:12.5px;line-height:12.5px;letter-spacing:-0.5px;color:#999999">30</div>
<div class="a" style="left:313px;top:326px;font-family:'Liberation Mono',monospace;font-size:12.5px;line-height:12.5px;letter-spacing:-0.5px;color:#999999">31</div>
<div class="a" style="left:313px;top:346px;font-family:'Liberation Mono',monospace;font-size:12.5px;line-height:12.5px;letter-spacing:-0.5px;color:#999999">32</div>
<div class="a" style="left:313px;top:366px;font-family:'Liberation Mono',monospace;font-size:12.5px;line-height:12.5px;letter-spacing:-0.5px;color:#999999">33</div>
<div class="a" style="left:313px;top:386px;font-family:'Liberation Mono',monospace;font-size:12.5px;line-height:12.5px;letter-spacing:-0.5px;color:#999999">34</div>
<div class="a" style="left:313px;top:406px;font-family:'Liberation Mono',monospace;font-size:12.5px;line-height:12.5px;letter-spacing:-0.5px;color:#999999">35</div>
<div class="a" style="left:313px;top:426px;font-family:'Liberation Mono',monospace;font-size:12.5px;line-height:12.5px;letter-spacing:-0.5px;color:#999999">36</div>
<div class="a" style="left:313px;top:446px;font-family:'Liberation Mono',monospace;font-size:12.5px;line-height:12.5px;letter-spacing:-0.5px;color:#999999">37</div>
<div class="a" style="left:313px;top:466px;font-family:'Liberation Mono',monospace;font-size:12.5px;line-height:12.5px;letter-spacing:-0.5px;color:#999999">38</div>
<div class="a" style="left:313px;top:486px;font-family:'Liberation Mono',monospace;font-size:12.5px;line-height:12.5px;letter-spacing:-0.5px;color:#999999">39</div>
<div class="a" style="left:313px;top:506px;font-family:'Liberation Mono',monospace;font-size:12.5px;line-height:12.5px;letter-spacing:-0.5px;color:#999999">40</div>
<div class="a" style="left:313px;top:526px;font-family:'Liberation Mono',monospace;font-size:12.5px;line-height:12.5px;letter-spacing:-0.5px;color:#999999">41</div>
<div class="a" style="left:313px;top:546px;font-family:'Liberation Mono',monospace;font-size:12.5px;line-height:12.5px;letter-spacing:-0.5px;color:#999999">42</div>
<div class="a" style="left:397px;top:86px;font-family:'Liberation Mono',monospace;font-size:12.5px;line-height:12.5px;letter-spacing:-0.5px"><span style="color:#000080;-webkit-text-stroke:0.4px #000080;">&lt;string-array</span><span style="color:#000000;"> </span><span style="color:#0000ff;-webkit-text-stroke:0.4px #0000ff;">name</span><span style="color:#0000ff;">=</span><span style="color:#008000;-webkit-text-stroke:0.4px #008000;">"bg_color_array"</span><span style="color:#000080;-webkit-text-stroke:0.4px #000080;">&gt;</span></div>
<div class="a" style="left:425px;top:106px;font-family:'Liberation Mono',monospace;font-size:12.5px;line-height:12.5px;letter-spacing:-0.5px"><span style="color:#000080;-webkit-text-stroke:0.4px #000080;">&lt;item&gt;</span><span style="color:#000000;">#F44336</span><span style="color:#000080;-webkit-text-stroke:0.4px #000080;">&lt;/item&gt;</span></div>
<div class="a" style="left:337px;top:107px;width:8px;height:8px;background:#f44336;"></div>
<div class="a" style="left:425px;top:126px;font-family:'Liberation Mono',monospace;font-size:12.5px;line-height:12.5px;letter-spacing:-0.5px"><span style="color:#000080;-webkit-text-stroke:0.4px #000080;">&lt;item&gt;</span><span style="color:#000000;">#9C27B0</span><span style="color:#000080;-webkit-text-stroke:0.4px #000080;">&lt;/item&gt;</span></div>
<div class="a" style="left:337px;top:127px;width:8px;height:8px;background:#9c27b0;"></div>
<div class="a" style="left:425px;top:146px;font-family:'Liberation Mono',monospace;font-size:12.5px;line-height:12.5px;letter-spacing:-0.5px"><span style="color:#000080;-webkit-text-stroke:0.4px #000080;">&lt;item&gt;</span><span style="color:#000000;">#FFEB3B</span><span style="color:#000080;-webkit-text-stroke:0.4px #000080;">&lt;/item&gt;</span></div>
<div class="a" style="left:337px;top:147px;width:8px;height:8px;background:#ffeb3b;"></div>
<div class="a" style="left:425px;top:166px;font-family:'Liberation Mono',monospace;font-size:12.5px;line-height:12.5px;letter-spacing:-0.5px"><span style="color:#000080;-webkit-text-stroke:0.4px #000080;">&lt;item&gt;</span><span style="color:#000000;">#CDDC39</span><span style="color:#000080;-webkit-text-stroke:0.4px #000080;">&lt;/item&gt;</span></div>
<div class="a" style="left:337px;top:167px;width:8px;height:8px;background:#cddc39;"></div>
<div class="a" style="left:425px;top:186px;font-family:'Liberation Mono',monospace;font-size:12.5px;line-height:12.5px;letter-spacing:-0.5px"><span style="color:#000080;-webkit-text-stroke:0.4px #000080;">&lt;item&gt;</span><span style="color:#000000;">#4CAF50</span><span style="color:#000080;-webkit-text-stroke:0.4px #000080;">&lt;/item&gt;</span></div>
<div class="a" style="left:337px;top:187px;width:8px;height:8px;background:#4caf50;"></div>
<div class="a" style="left:425px;top:206px;font-family:'Liberation Mono',monospace;font-size:12.5px;line-height:12.5px;letter-spacing:-0.5px"><span style="color:#000080;-webkit-text-stroke:0.4px #000080;">&lt;item&gt;</span><span style="color:#000000;">#00BCD4</span><span style="color:#000080;-webkit-text-stroke:0.4px #000080;">&lt;/item&gt;</span></div>
<div class="a" style="left:337px;top:207px;width:8px;height:8px;background:#00bcd4;"></div>
<div class="a" style="left:397px;top:226px;font-family:'Liberation Mono',monospace;font-size:12.5px;line-height:12.5px;letter-spacing:-0.5px"><span style="color:#000080;-webkit-text-stroke:0.4px #000080;">&lt;/string-array&gt;</span></div>
<div class="a" style="left:397px;top:286px;font-family:'Liberation Mono',monospace;font-size:12.5px;line-height:12.5px;letter-spacing:-0.5px"><span style="color:#000080;-webkit-text-stroke:0.4px #000080;">&lt;string-array</span><span style="color:#000000;"> </span><span style="color:#0000ff;-webkit-text-stroke:0.4px #0000ff;">name</span><span style="color:#0000ff;">=</span><span style="color:#008000;-webkit-text-stroke:0.4px #008000;">"app_language"</span><span style="color:#000080;-webkit-text-stroke:0.4px #000080;">&gt;</span></div>
<div class="a" style="left:425px;top:306px;font-family:'Liberation Mono',monospace;font-size:12.5px;line-height:12.5px;letter-spacing:-0.5px"><span style="color:#000080;-webkit-text-stroke:0.4px #000080;">&lt;item&gt;</span><span style="color:#000000;">English</span><span style="color:#000080;-webkit-text-stroke:0.4px #000080;">&lt;/item&gt;</span></div>
<div class="a" style="left:425px;top:326px;font-family:'Liberation Mono',monospace;font-size:12.5px;line-height:12.5px;letter-spacing:-0.5px"><span style="color:#000080;-webkit-text-stroke:0.4px #000080;">&lt;item&gt;</span><span style="display:inline-block;width:30px"></span><span style="color:#000080;-webkit-text-stroke:0.4px #000080;">&lt;/item&gt;</span></div>
<div class="a" style="left:397px;top:346px;font-family:'Liberation Mono',monospace;font-size:12.5px;line-height:12.5px;letter-spacing:-0.5px"><span style="color:#000080;-webkit-text-stroke:0.4px #000080;">&lt;/string-array&gt;</span></div>
<div class="a" style="left:369px;top:366px;font-family:'Liberation Mono',monospace;font-size:12.5px;line-height:12.5px;letter-spacing:-0.5px"><span style="color:#8c8c8c;font-style:italic;">&lt;!--    apply same number of language with same number of laguage code--&gt;</span></div>
<div class="a" style="left:397px;top:406px;font-family:'Liberation Mono',monospace;font-size:12.5px;line-height:12.5px;letter-spacing:-0.5px"><span style="color:#000080;-webkit-text-stroke:0.4px #000080;">&lt;string-array</span><span style="color:#000000;"> </span><span style="color:#0000ff;-webkit-text-stroke:0.4px #0000ff;">name</span><span style="color:#0000ff;">=</span><span style="color:#008000;-webkit-text-stroke:0.4px #008000;">"app_language_code"</span><span style="color:#000080;-webkit-text-stroke:0.4px #000080;">&gt;</span></div>
<div class="a" style="left:425px;top:426px;font-family:'Liberation Mono',monospace;font-size:12.5px;line-height:12.5px;letter-spacing:-0.5px"><span style="color:#000080;-webkit-text-stroke:0.4px #000080;">&lt;item&gt;</span><span style="color:#000000;">en</span><span style="color:#000080;-webkit-text-stroke:0.4px #000080;">&lt;/item&gt;</span></div>
<div class="a" style="left:425px;top:446px;font-family:'Liberation Mono',monospace;font-size:12.5px;line-height:12.5px;letter-spacing:-0.5px"><span style="color:#000080;-webkit-text-stroke:0.4px #000080;">&lt;item&gt;</span><span style="color:#000000;">ar</span><span style="color:#000080;-webkit-text-stroke:0.4px #000080;">&lt;/item&gt;</span></div>
<div class="a" style="left:397px;top:466px;font-family:'Liberation Mono',monospace;font-size:12.5px;line-height:12.5px;letter-spacing:-0.5px"><span style="color:#000080;-webkit-text-stroke:0.4px #000080;">&lt;/string-array&gt;</span></div>
<div class="a" style="left:369px;top:526px;font-family:'Liberation Mono',monospace;font-size:12.5px;line-height:12.5px;letter-spacing:-0.5px"><span style="color:#000080;-webkit-text-stroke:0.4px #000080;">&lt;/resources&gt;</span></div>
<svg style="left:467px;top:321px;" width="31" height="19" viewBox="0 0 31 19"><g fill="none" stroke="#000" stroke-width="1.15" stroke-linecap="round"><path d="M4.5 13.3 H29.7"/><path d="M29.6 9.8 Q27.6 8.6 26.3 9.8 Q25.4 11.2 26.3 12.3 Q27.8 13.3 29.8 13.1"/><path d="M21 10 V14.3 Q20.6 16.4 17.5 16.6"/><path d="M15.6 10 V13.3"/><path d="M4.6 13.3 Q1.2 13.2 1.4 15.6 Q2.2 17.9 4.8 17.6 Q6.7 17 6.4 15.2"/></g><circle cx="14.3" cy="16.4" r="0.8" fill="#000"/></svg>
<svg style="left:775px;top:376px;" width="49" height="3" viewBox="0 0 49 3"><path d="M0 2.5 L2 0.5 L4 2.5 L6 0.5 L8 2.5 L10 0.5 L12 2.5 L14 0.5 L16 2.5 L18 0.5 L20 2.5 L22 0.5 L24 2.5 L26 0.5 L28 2.5 L30 0.5 L32 2.5 L34 0.5 L36 2.5 L38 0.5 L40 2.5 L42 0.5 L44 2.5 L46 0.5 L48 2.5" fill="none" stroke="#9bc99b" stroke-width="0.9"/></svg>
<div class="a" style="left:399px;top:101px;width:1px;height:120px;background:#e3e3e3;"></div>
<div class="a" style="left:399px;top:301px;width:1px;height:40px;background:#e3e3e3;"></div>
<div class="a" style="left:399px;top:421px;width:1px;height:40px;background:#e3e3e3;"></div>
<svg style="left:359px;top:87px;" width="9" height="11" viewBox="0 0 9 11"><path d="M0.5 0.5 H8.5 V6.5 L4.5 10.2 L0.5 6.5 Z" fill="#fff" stroke="#c6c6c6" stroke-width="1"/><path d="M2 4.5 H7" stroke="#c6c6c6" stroke-width="1"/></svg>
<svg style="left:359px;top:287px;" width="9" height="11" viewBox="0 0 9 11"><path d="M0.5 0.5 H8.5 V6.5 L4.5 10.2 L0.5 6.5 Z" fill="#fff" stroke="#c6c6c6" stroke-width="1"/><path d="M2 4.5 H7" stroke="#c6c6c6" stroke-width="1"/></svg>
<svg style="left:359px;top:407px;" width="9" height="11" viewBox="0 0 9 11"><path d="M0.5 0.5 H8.5 V6.5 L4.5 10.2 L0.5 6.5 Z" fill="#fff" stroke="#c6c6c6" stroke-width="1"/><path d="M2 4.5 H7" stroke="#c6c6c6" stroke-width="1"/></svg>
<svg style="left:359px;top:225px;" width="9" height="11" viewBox="0 0 9 11"><path d="M0.5 10.5 H8.5 V4.3 L4.5 0.6 L0.5 4.3 Z" fill="#fff" stroke="#c6c6c6" stroke-width="1"/><path d="M2 6.5 H7" stroke="#c6c6c6" stroke-width="1"/></svg>
<svg style="left:359px;top:345px;" width="9" height="11" viewBox="0 0 9 11"><path d="M0.5 10.5 H8.5 V4.3 L4.5 0.6 L0.5 4.3 Z" fill="#fff" stroke="#c6c6c6" stroke-width="1"/><path d="M2 6.5 H7" stroke="#c6c6c6" stroke-width="1"/></svg>
<svg style="left:359px;top:465px;" width="9" height="11" viewBox="0 0 9 11"><path d="M0.5 10.5 H8.5 V4.3 L4.5 0.6 L0.5 4.3 Z" fill="#fff" stroke="#c6c6c6" stroke-width="1"/><path d="M2 6.5 H7" stroke="#c6c6c6" stroke-width="1"/></svg>
<svg style="left:359px;top:525px;" width="9" height="11" viewBox="0 0 9 11"><path d="M0.5 10.5 H8.5 V4.3 L4.5 0.6 L0.5 4.3 Z" fill="#fff" stroke="#c6c6c6" stroke-width="1"/><path d="M2 6.5 H7" stroke="#c6c6c6" stroke-width="1"/></svg>
<svg style="left:530px;top:330px;" width="120" height="160" viewBox="0 0 120 160"><path d="M16.5 20 L61.85 13.15 V16.4 H107.4 V23.4 H61.85 V26.75 Z" fill="none" stroke="#ed1c24" stroke-width="4.8" stroke-linejoin="round"/><path d="M3.5 142 L57.15 134.8 V138.4 H109.4 V145.3 H57.15 V149.2 Z" fill="none" stroke="#ed1c24" stroke-width="4.8" stroke-linejoin="round"/></svg>
<div class="a" style="left:828px;top:400px;font-family:'Liberation Sans',sans-serif;font-size:13.5px;line-height:13.5px;color:#ed1c24;letter-spacing:0.019px;">Add here language name and language code</div>
<div class="a" style="left:828px;top:418px;font-family:'Liberation Sans',sans-serif;font-size:13.5px;line-height:13.5px;color:#ed1c24;letter-spacing:0.069px;">in the next step you can get language code .</div>
<svg style="left:31px;top:692px;" width="11" height="10" viewBox="0 0 11 10"><g fill="#6e6e6e"><rect x="0" y="0.5" width="2" height="2"/><rect x="3.5" y="0.5" width="7" height="2"/><rect x="0" y="4" width="2" height="2"/><rect x="3.5" y="4" width="7" height="2"/><rect x="0" y="7.5" width="2" height="2"/><rect x="3.5" y="7.5" width="7" height="2"/></g></svg>
<div class="a" style="left:47px;top:692px;font-family:'Liberation Sans',sans-serif;font-size:12px;line-height:12px;color:#000;letter-spacing:-0.862px;">TODO</div>
<svg style="left:100px;top:691px;" width="11" height="11" viewBox="0 0 11 11"><rect x="0" y="0" width="11" height="11" fill="#6e6e6e"/><path d="M2 2.5 L4.5 5 L2 7.5" fill="none" stroke="#f2f2f2" stroke-width="1.1"/><path d="M5 8.3 H9" stroke="#f2f2f2" stroke-width="1.1"/></svg>
<div class="a" style="left:116px;top:692px;font-family:'Liberation Sans',sans-serif;font-size:12px;line-height:12px;color:#000;letter-spacing:-0.168px;">Terminal</div>
<svg style="left:180px;top:690px;" width="13" height="13" viewBox="0 0 13 13"><path d="M0.5 4.5 L4.5 0.5 L7.5 0.5 L5.5 2.5 L2.5 6 Z" fill="#6e6e6e"/><path d="M4.5 3.5 L12 11" stroke="#6e6e6e" stroke-width="2.4"/></svg>
<div class="a" style="left:197px;top:692px;font-family:'Liberation Sans',sans-serif;font-size:12px;line-height:12px;color:#000;letter-spacing:-0.337px;">Build</div>
<svg style="left:244px;top:692px;" width="11" height="10" viewBox="0 0 11 10"><g fill="#6e6e6e"><rect x="0" y="0.5" width="11" height="2"/><rect x="0" y="4" width="7" height="2"/><rect x="0" y="7.5" width="9" height="2"/></g></svg>
<div class="a" style="left:260px;top:692px;font-family:'Liberation Sans',sans-serif;font-size:12px;line-height:12px;color:#000;letter-spacing:-0.375px;"><span class="ul">6</span>: Logcat</div>
<svg style="left:326px;top:691px;" width="13" height="10" viewBox="0 0 13 10"><path d="M1.3 9.5 A5.3 5.3 0 0 1 9.5 3.2" fill="none" stroke="#6e6e6e" stroke-width="1.7"/><path d="M5.5 9.5 L9.8 3.5 L7.8 10 Z" fill="#6e6e6e"/><path d="M10.8 5 Q12.3 7 12.3 9.5 H10.3 Z" fill="#6e6e6e"/></svg>
<div class="a" style="left:344px;top:692px;font-family:'Liberation Sans',sans-serif;font-size:12px;line-height:12px;color:#000;letter-spacing:-0.251px;">Profiler</div>
<svg style="left:404px;top:690px;" width="11" height="13" viewBox="0 0 11 13"><g fill="#6e6e6e"><ellipse cx="5.5" cy="2" rx="5.5" ry="2"/><path d="M0 3.5 Q5.5 6.5 11 3.5 V5.5 Q5.5 8.5 0 5.5 Z"/><path d="M0 7 Q5.5 10 11 7 V9 Q5.5 12 0 9 Z"/><path d="M0 10.5 Q5.5 13.5 11 10.5 V11.5 Q5.5 14 0 11.5 Z"/></g></svg>
<div class="a" style="left:420px;top:692px;font-family:'Liberation Sans',sans-serif;font-size:12px;line-height:12px;color:#000;letter-spacing:-0.281px;">Database Inspector</div>
<svg style="left:544px;top:692px;" width="8" height="10" viewBox="0 0 8 10"><path d="M0 0 L8 5 L0 10 Z" fill="#6e6e6e"/></svg>
<div class="a" style="left:559px;top:692px;font-family:'Liberation Sans',sans-serif;font-size:12px;line-height:12px;color:#000;letter-spacing:-0.393px;"><span class="ul">4</span>: Run</div>
<svg style="left:1140px;top:690px;" width="13" height="13" viewBox="0 0 13 13"><path d="M6.5 0 A6.5 6.5 0 1 0 6.5 13 H13 V6.5 A6.5 6.5 0 0 0 6.5 0 Z" fill="#eaa11f"/></svg>
<div class="a" style="left:1144px;top:692px;font-family:'Liberation Sans',sans-serif;font-size:10px;line-height:10px;color:#000">2</div>
<div class="a" style="left:1157px;top:692px;font-family:'Liberation Sans',sans-serif;font-size:12px;line-height:12px;color:#000;letter-spacing:-0.449px;">Event Log</div>
<svg style="left:1230px;top:689px;" width="13" height="13" viewBox="0 0 13 13"><path d="M0.5 9 V0.5 H9.5 M2.5 10.5 V2.5 H11" fill="none" stroke="#6e6e6e" stroke-width="1"/><circle cx="8" cy="8" r="2.6" fill="#f2f2f2" stroke="#6e6e6e" stroke-width="1.2"/><path d="M10 10 L12.5 12.5" stroke="#6e6e6e" stroke-width="1.4"/></svg>
<div class="a" style="left:1247px;top:692px;font-family:'Liberation Sans',sans-serif;font-size:12px;line-height:12px;color:#000;letter-spacing:-0.233px;">Layout Inspector</div>
<svg style="left:5px;top:711px;" width="13" height="12" viewBox="0 0 13 12"><rect x="2.5" y="0.5" width="9.5" height="9.5" fill="none" stroke="#6e6e6e" stroke-width="1"/><path d="M0.5 2.5 V11.5 H10" fill="none" stroke="#6e6e6e" stroke-width="1"/></svg>
<div class="a" style="left:26px;top:711px;font-family:'Liberation Sans',sans-serif;font-size:12px;line-height:12px;color:#000;letter-spacing:-0.125px;">Gradle build finished in 2 s 327 ms (39 minutes ago)</div>
<div class="a" style="left:1144px;top:711px;font-family:'Liberation Sans',sans-serif;font-size:12px;line-height:12px;color:#000;letter-spacing:-0.561px;">1:1</div>
<div class="a" style="left:1171px;top:711px;font-family:'Liberation Sans',sans-serif;font-size:12px;line-height:12px;color:#000;letter-spacing:-1.002px;">LF</div>
<div class="a" style="left:1195px;top:711px;font-family:'Liberation Sans',sans-serif;font-size:12px;line-height:12px;color:#8c8c8c;letter-spacing:-0.400px;">UTF-8</div>
<div class="a" style="left:1237px;top:711px;font-family:'Liberation Sans',sans-serif;font-size:12px;line-height:12px;color:#000;letter-spacing:-0.379px;">4 spaces</div>
<svg style="left:1293px;top:710px;" width="11" height="12" viewBox="0 0 11 12"><path d="M3 5.5 V3 A2.5 2.5 0 0 1 8 3" fill="none" stroke="#6e6e6e" stroke-width="1.3"/><rect x="2.5" y="5.5" width="8" height="6" fill="#6e6e6e"/></svg>
<svg style="left:1318px;top:709px;" width="13" height="14" viewBox="0 0 13 14"><path d="M3 4 L4 0.5 H9 L10 4 Z" fill="#6e6e6e"/><rect x="0.5" y="4" width="12" height="1.4" fill="#6e6e6e"/><path d="M2.6 6 Q2.6 12.5 6.5 13 Q10.4 12.5 10.4 6 Z" fill="#6e6e6e"/><path d="M4.2 8 H5.6 M7.4 8 H8.8 M5 10.6 Q6.5 11.6 8 10.6" stroke="#f2f2f2" stroke-width="0.9" fill="none"/></svg>
<svg style="left:1342px;top:710px;" width="13" height="13" viewBox="0 0 13 13"><circle cx="6.5" cy="6.5" r="6.5" fill="#e55b5b"/><rect x="5.7" y="2.5" width="1.6" height="5" fill="#fff"/><rect x="5.7" y="9" width="1.6" height="1.6" fill="#fff"/></svg>
</body></html>
